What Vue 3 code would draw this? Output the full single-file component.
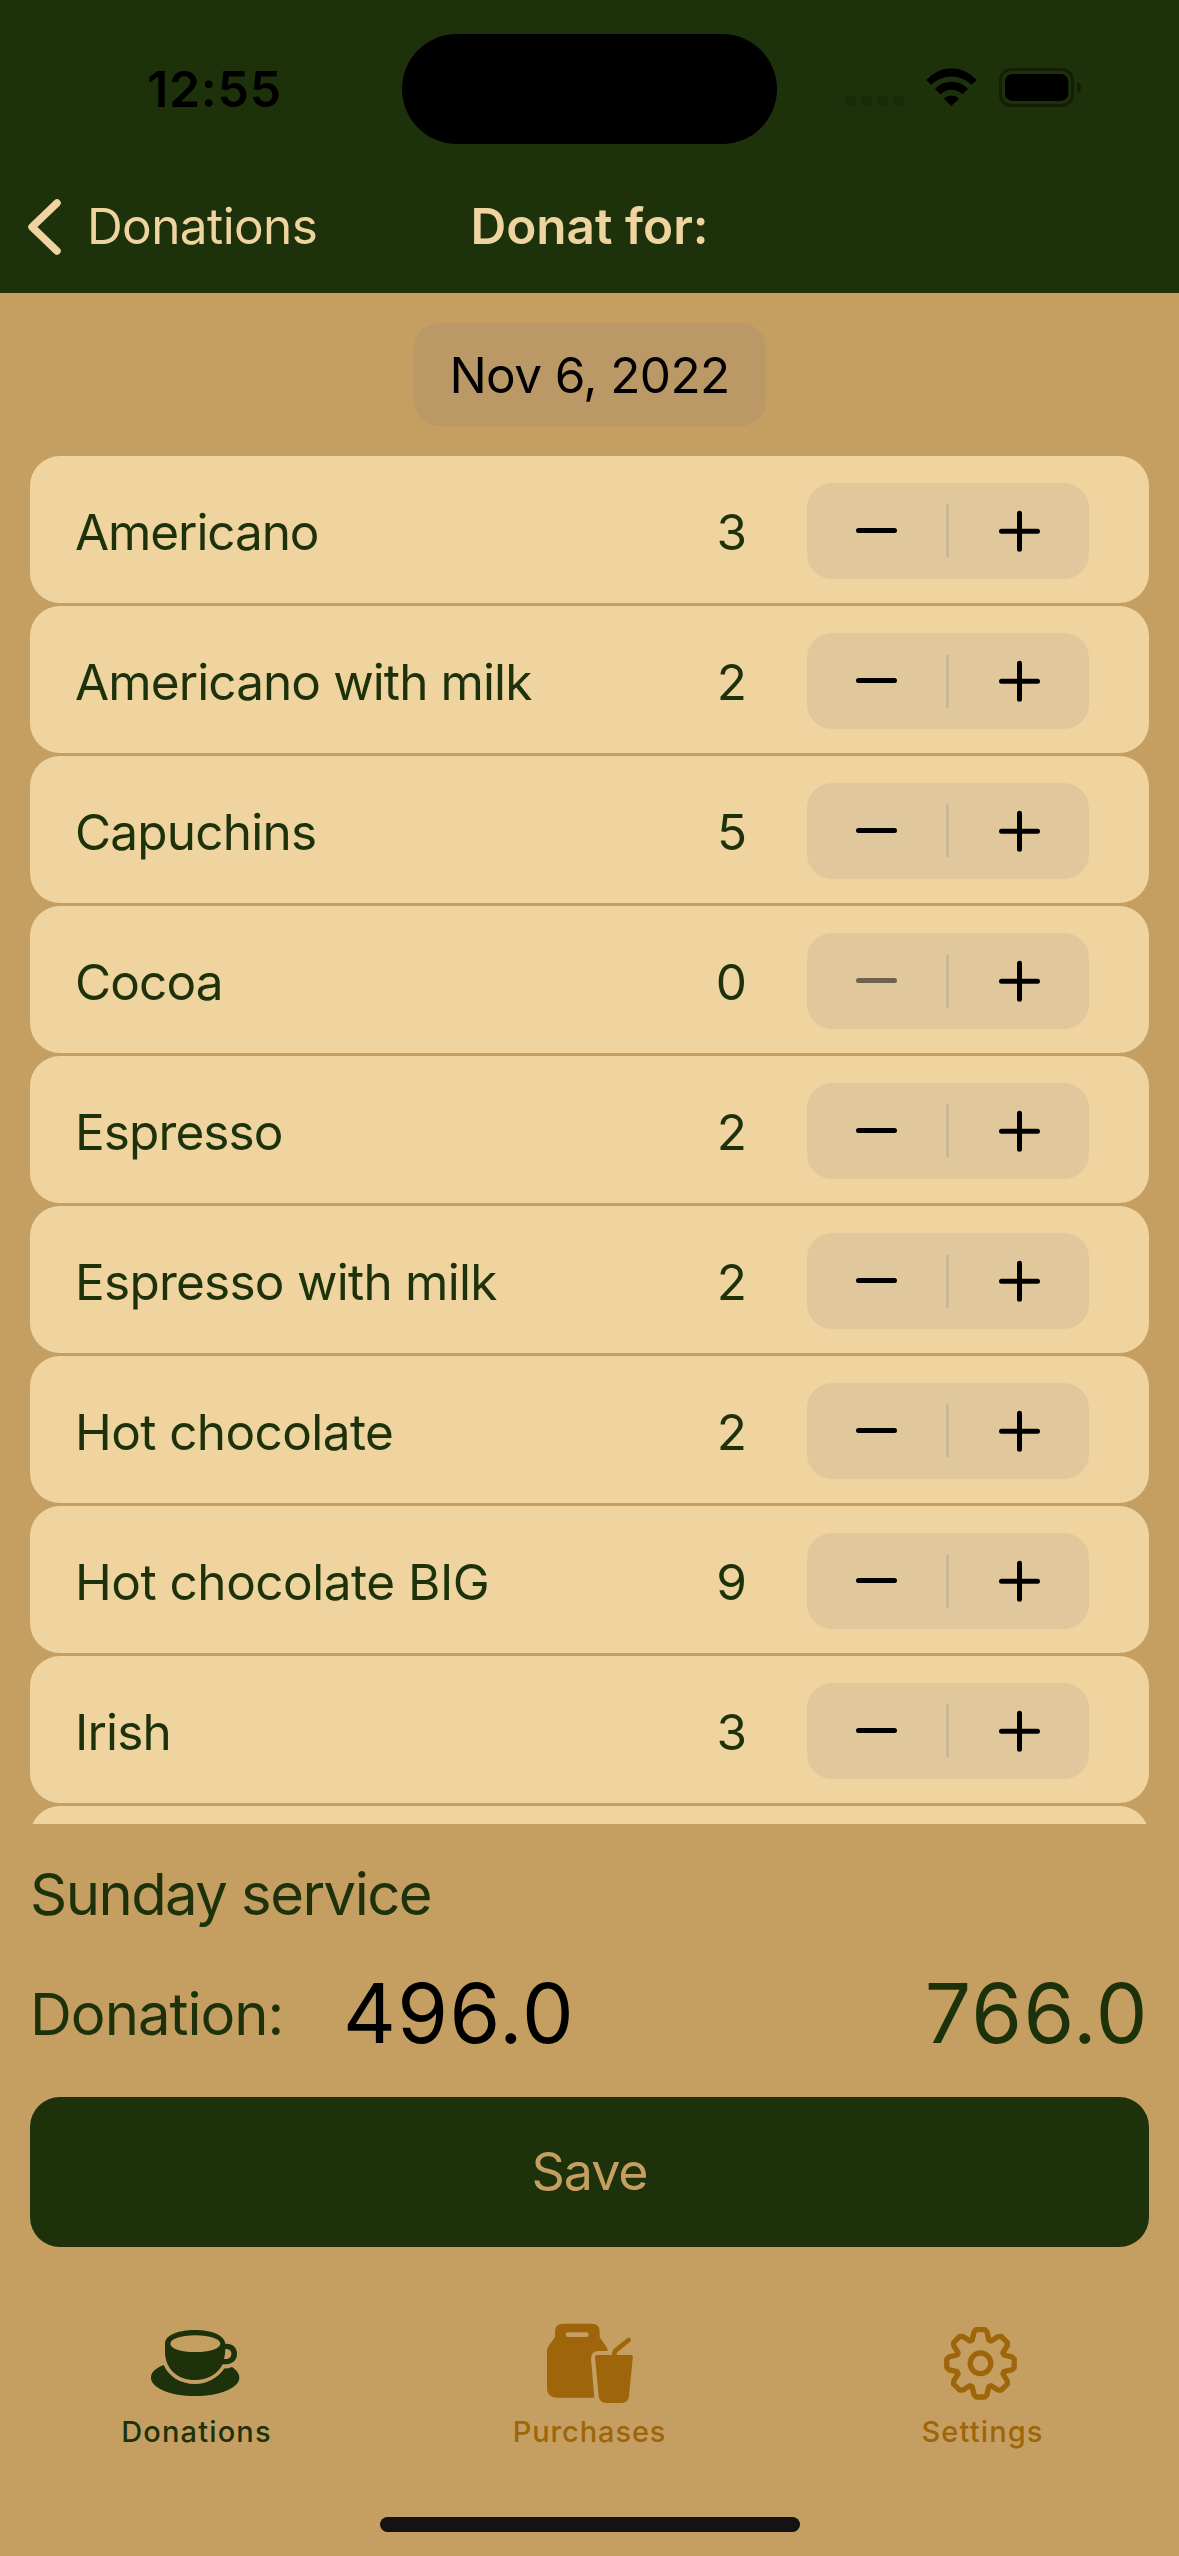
<script setup>
import { ref } from 'vue'

// tracking: letter spacing of the drink name, in px
const drinks = ref([
  { name: 'Americano', count: 3, tracking: -1.1 },
  { name: 'Americano with milk', count: 2, tracking: -0.9 },
  { name: 'Capuchins', count: 5, tracking: -0.8 },
  { name: 'Cocoa', count: 0, tracking: -0.9 },
  { name: 'Espresso', count: 2, tracking: -0.9 },
  { name: 'Espresso with milk', count: 2, tracking: -0.75 },
  { name: 'Hot chocolate', count: 2, tracking: -0.6 },
  { name: 'Hot chocolate BIG', count: 9, tracking: -0.5 },
  { name: 'Irish', count: 3, tracking: -0.8 },
  { name: '', count: null, tracking: 0 },
])

// Outline of the eight-toothed gear, centred on the origin
const tooth = [[-25, -70], [-19.5, -94], [-13, -101], [13, -101], [19.5, -94], [25, -70]]
const gearPoints = Array.from({ length: 8 }, (_, k) => {
  const a = (k * Math.PI) / 4
  return tooth
    .map(([x, y]) => `${(x * Math.cos(a) - y * Math.sin(a)).toFixed(1)},${(x * Math.sin(a) + y * Math.cos(a)).toFixed(1)}`)
    .join(' ')
}).join(' ')
</script>

<template>
  <div class="screen">
    <header class="header">
      <div class="status">
        <div class="clock">12:55</div>
        <div class="island"></div>
        <svg class="indicators" viewBox="0 0 810 240">
          <g fill="#182a0a">
            <rect v-for="i in 4" :key="i" :x="i * 48" y="138" width="30" height="30" rx="11" />
          </g>
          <path d="M289 90A99 99 0 0 1 440 90L425 104A89 89 0 0 0 303 104Z" />
          <path d="M315 117A67 67 0 0 1 414 117L398 133A47 47 0 0 0 331 133Z" />
          <path d="M342 146A32 32 0 0 1 387 146L364 168Z" />
          <rect x="511.500" y="58.500" width="216" height="108" rx="32" fill="none" stroke="#131f07" stroke-width="9" />
          <rect x="525" y="72" width="190" height="81" rx="22" />
          <path d="M741 95Q753 101 753 113T741 130Z" fill="#131f07" />
        </svg>
      </div>
      <nav class="nav">
        <div class="back">
          <svg class="chevron" viewBox="0 0 34 58"><path d="M29 5L4 29L29 53" /></svg>
          <span class="back-label">Donations</span>
        </div>
        <div class="title">Donat for:</div>
      </nav>
    </header>

    <div class="date-row">
      <div class="date">Nov 6, 2022</div>
    </div>

    <div class="list">
      <div v-for="(d, i) in drinks" :key="i" class="card">
        <span class="name" :style="{ letterSpacing: d.tracking + 'px' }">{{ d.name }}</span>
        <span class="count">{{ d.count }}</span>
        <div class="stepper">
          <svg class="sign" :class="{ off: d.count === 0 }" viewBox="0 0 42 42"><path d="M3.500 20.500H39.500" /></svg>
          <span class="divider"></span>
          <svg class="sign" viewBox="0 0 42 42"><path d="M2.500 21.300H38.500M20.500 3.300V39.300" /></svg>
        </div>
      </div>
    </div>

    <section class="summary">
      <div class="service">Sunday service</div>
      <div class="donation">
        <span class="donation-label">Donation:</span>
        <span class="amount entered">496.0</span>
        <span class="amount total">766.0</span>
      </div>
      <div class="save">Save</div>
    </section>

    <footer class="tabs">
      <div class="tab active">
        <svg class="tab-icon" viewBox="141 90 297 255">
          <path d="M191 225C165 235 153 248 153 263C153 294 212 318 285 318S418 294 418 263C418 252 410 240 396 231Q386 236 374 235C352 265 322 282 285 282C240 282 205 258 191 225Z" />
          <path fill-rule="evenodd" d="M195 160C195 136 235 120 285 120S373 135 376 161C398 160 411 172 411 191C411 212 397 224 368 223C352 254 322 270 285 270C232 270 195 236 195 185ZM211 161C211 175 242 186 286 186S361 175 361 161S330 136 286 136S211 147 211 161ZM376 177Q376 194 372 207C387 208 394 202 394 191C394 182 388 177 376 177Z" />
        </svg>
        <span class="tab-label">Donations</span>
      </div>
      <div class="tab">
        <svg class="tab-icon" viewBox="150 90 297 255">
          <path fill-rule="evenodd" d="M195 142V125Q195 101 219 101H306Q329 101 329 125V142L348 169Q353 176 353 183H326Q303 183 303 206L313 323H200Q171 323 171 294V182Q171 174 177 166ZM234 127A7 7 0 0 0 234 141H289A7 7 0 0 0 289 127Z" />
          <path d="M321 195H424Q429 195 428.500 201L417 318Q415 339 394 339H350Q328 339 326 318L315 201Q315 195 321 195Z" />
          <path class="straw" d="M373 200V192Q373 184 380 179L416 150" />
        </svg>
        <span class="tab-label purchases">Purchases</span>
      </div>
      <div class="tab">
        <svg class="tab-icon gear" viewBox="-142.500 -130 297 255">
          <polygon :points="gearPoints" />
          <circle r="31" />
        </svg>
        <span class="tab-label">Settings</span>
      </div>
    </footer>
    <div class="home"></div>
  </div>
</template>

<style>
body {
  margin: 0;
  background: #c59f62;
}
</style>

<style scoped>
.screen {
  width: 1179px;
  height: 2556px;
  overflow: hidden;
  display: flex;
  flex-direction: column;
  background: #c59f62;
  color: #1d320a;
  font-family: Inter, 'Liberation Sans', sans-serif;
  font-size: 49.5px;
  line-height: 1;
  white-space: nowrap;
}
.header {
  height: 293px;
  background: #1d320a;
}
.status {
  height: 178px;
  display: grid;
  grid-template-columns: 402px 375px 402px;
  align-items: center;
}
.clock {
  padding-left: 27px;
  text-align: center;
  color: #000;
  font-weight: 600;
  font-size: 50px;
  letter-spacing: 0.7px;
}
.island {
  height: 110px;
  border-radius: 55px;
  background: #000;
}
.indicators {
  width: 270px;
  height: 80px;
  margin: 2px 0 0 53px;
}
.nav {
  height: 98px;
  display: grid;
  grid-template-columns: 1fr auto 1fr;
  align-items: center;
  color: #efd49f;
}
.back {
  display: flex;
  align-items: center;
  padding-left: 28px;
  gap: 25px;
}
.back-label {
  letter-spacing: -0.6px;
}
.chevron {
  width: 34px;
  height: 58px;
  fill: none;
  stroke: #efd49f;
  stroke-width: 7.500;
  stroke-linecap: round;
  stroke-linejoin: round;
}
.title {
  font-weight: 600;
}
.date-row {
  display: flex;
  justify-content: center;
  padding: 30px 0;
}
.date {
  width: 352px;
  height: 103px;
  line-height: 104px;
  border-radius: 25px;
  text-align: center;
  letter-spacing: -0.6px;
  background: #ba9966;
  color: #000;
}
.list {
  height: 1368px;
  overflow: hidden;
  display: flex;
  flex-direction: column;
  gap: 3px;
  padding: 0 30px;
}
.card {
  flex: none;
  box-sizing: border-box;
  height: 147px;
  padding: 3px 60px 0 45px;
  border-radius: 30px;
  display: flex;
  align-items: center;
  background: #efd49f;
}
.name {
  flex: 1;
  margin-top: 3px;
}
.count {
  margin: 3px 60px 0 0;
}
.stepper {
  width: 282px;
  height: 96px;
  border-radius: 25px;
  background: #e0c89c;
  display: flex;
  align-items: center;
  padding: 0 48px;
  box-sizing: border-box;
}
.sign {
  width: 42px;
  height: 42px;
  fill: none;
  stroke: #000;
  stroke-width: 5;
  stroke-linecap: round;
}
.sign.off {
  opacity: 0.5;
}
.divider {
  width: 3px;
  height: 54px;
  margin: 0 50px 0 49px;
  border-radius: 2px;
  background: #cab795;
}
.summary {
  padding: 0 30px;
}
.service {
  height: 140px;
  line-height: 140px;
  font-size: 58px;
  letter-spacing: -1.55px;
}
.donation {
  height: 100px;
  display: flex;
  align-items: center;
  margin-bottom: 33px;
}
.donation-label {
  width: 313px;
  font-size: 58px;
  letter-spacing: -1px;
}
.amount {
  font-size: 82px;
  letter-spacing: 1.4px;
}
.entered {
  color: #000;
}
.total {
  margin-left: auto;
}
.save {
  height: 150px;
  line-height: 150px;
  border-radius: 30px;
  text-align: center;
  font-size: 52px;
  letter-spacing: -1.1px;
  background: #1d320a;
  color: #c59f62;
}
.tabs {
  display: grid;
  grid-template-columns: repeat(3, 1fr);
  padding-top: 73px;
}
.tab {
  display: flex;
  flex-direction: column;
  align-items: center;
  gap: 12px;
  color: #9e650a;
}
.tab.active {
  color: #1d320a;
}
.tab-icon {
  width: 99px;
  height: 85px;
  fill: currentColor;
}
.straw {
  fill: none;
  stroke: currentColor;
  stroke-width: 14;
  stroke-linecap: round;
}
.gear {
  fill: none;
  stroke: currentColor;
  stroke-width: 16;
  stroke-linejoin: round;
}
.tab-label {
  font-size: 29px;
  font-weight: 500;
  letter-spacing: 1.15px;
}
.tab-label.purchases {
  letter-spacing: 0.9px;
}
.home {
  width: 420px;
  height: 15px;
  margin: 71px auto 0;
  border-radius: 8px;
  background: #131313;
}
</style>
